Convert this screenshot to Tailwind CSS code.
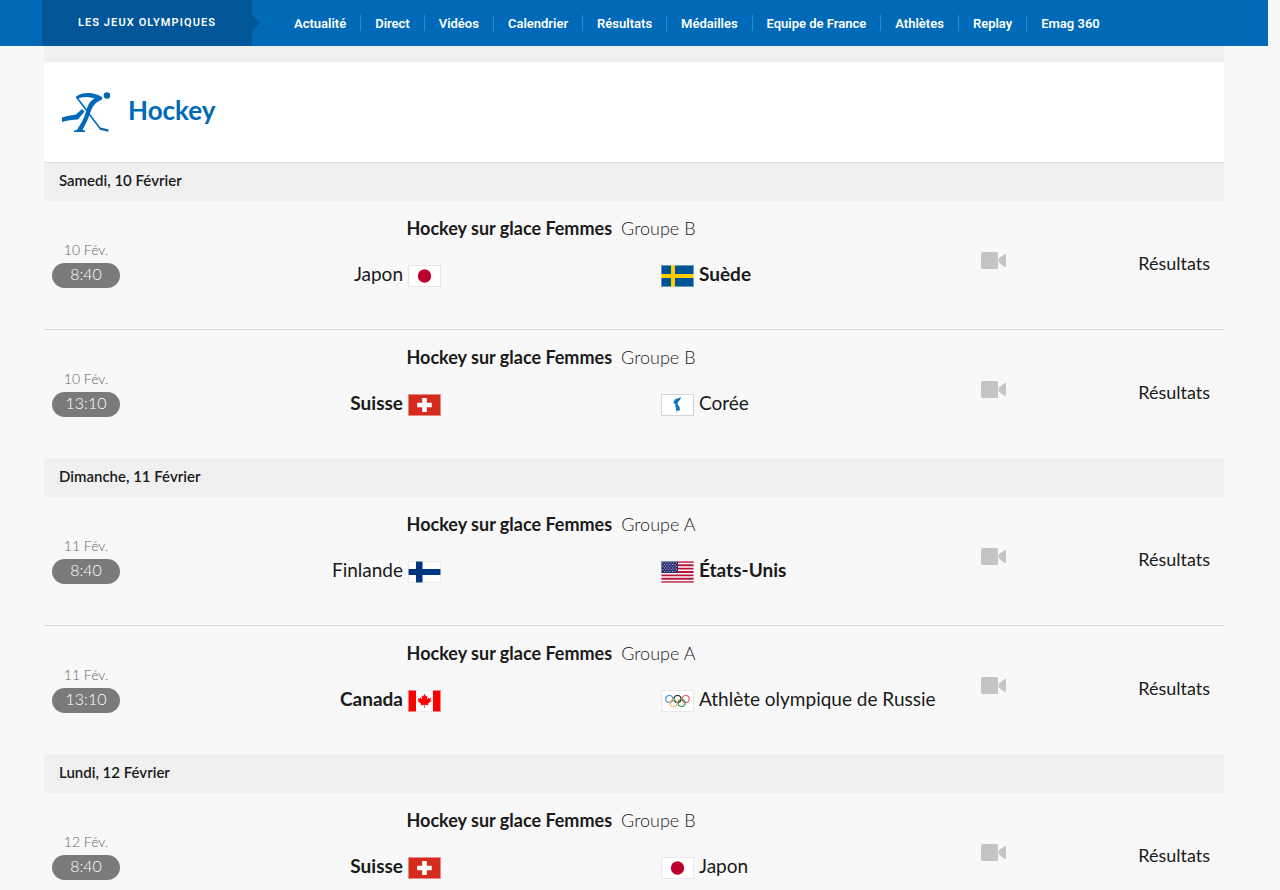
<!DOCTYPE html>
<html lang="fr">
<head>
<meta charset="utf-8">
<meta name="viewport" content="width=device-width, initial-scale=1">
<title>Hockey - Les Jeux Olympiques</title>
<script src="https://cdn.jsdelivr.net/npm/@tailwindcss/browser@4"></script>
</head>
<body class="bg-[#f8f8f8] pr-3 font-['Lato',sans-serif] text-[#1a1a1a] h-screen overflow-hidden">
<svg class="hidden" aria-hidden="true">
  <symbol id="video" viewBox="0 0 25 17"><rect width="17" height="17" rx="1.5" fill="#c4c4c4"/><path d="M17.800 6.500L23.500 2.300Q25 1.600 25 2.500V14.500Q25 15.400 23.500 14.700L17.800 10.500z" fill="#c4c4c4"/></symbol>
  <symbol id="jp" viewBox="0 0 33 22"><rect x=".5" y=".5" width="32" height="21" fill="#fff" stroke="#e8e8e8"/><circle cx="16.500" cy="11" r="6.700" fill="#bc002d"/></symbol>
  <symbol id="se" viewBox="0 0 33 22"><rect width="33" height="22" fill="#005293"/><path d="M10 0h4v22h-4zM0 9h33v4H0z" fill="#fecb00"/><rect x=".5" y=".5" width="32" height="21" fill="none" stroke="#fff" stroke-opacity=".4"/></symbol>
  <symbol id="ch" viewBox="0 0 33 22"><rect width="33" height="22" fill="#d52b1e"/><path d="M14.200 4h4.600v4.700h5v4.600h-5V18h-4.600v-4.700h-5V8.700h5z" fill="#fff"/><rect x=".5" y=".5" width="32" height="21" fill="none" stroke="#fff" stroke-opacity=".45"/></symbol>
  <symbol id="kr" viewBox="0 0 33 22"><rect x=".5" y=".5" width="32" height="21" fill="#fff" stroke="#d4d4d4"/><path d="M20 3l-1 3-2 2-.5 2 2 3 .5 3-2 1-2-.5V13.500l-1-2 1-1-2-1-.5-2 2-2.500 2-.500z" fill="#0f76bd"/><path d="M14.500 18h1.500v1h-1.500z" fill="#9cc8e5"/></symbol>
  <symbol id="fi" viewBox="0 0 33 22"><rect width="33" height="22" fill="#fff"/><path d="M8 0h6.500v22H8zM0 8h33v6H0z" fill="#003580"/><rect x=".5" y=".5" width="32" height="21" fill="none" stroke="#e0e0e0" stroke-opacity=".6"/></symbol>
  <symbol id="us" viewBox="0 0 33 22"><rect width="33" height="22" fill="#fff"/><path d="M0 .85h33M0 4.230h33M0 7.610h33M0 11h33M0 14.380h33M0 17.770h33M0 21.150h33" stroke="#b9143c" stroke-width="1.900"/><rect width="17" height="12" fill="#2b2f6b"/><path d="M1.500 1.700h15M1.500 5.200h15M1.500 8.700h15" stroke="#fff" stroke-opacity=".65" stroke-dasharray="1 1.700"/><path d="M2.900 3.500h13M2.900 7h13M2.900 10.500h13" stroke="#fff" stroke-opacity=".65" stroke-dasharray="1 1.700"/><rect x=".5" y=".5" width="32" height="21" fill="none" stroke="#fff" stroke-opacity=".4"/></symbol>
  <symbol id="ca" viewBox="0 0 33 22"><rect width="33" height="22" fill="#fff"/><path d="M0 0h8v22H0zM25 0h8v22h-8z" fill="#f00"/><path d="M16.500 3.800l1.500 2.700 1.500-.7-.7 3.700 2.100-2 .4 1.100 1.900-.3-.7 2 1 .6-3.600 2.900.4 1.400-3.500-.5v3.300h-.6v-3.300l-3.500.5.400-1.400-3.600-2.900 1-.6-.7-2 1.900.3.400-1.100 2.100 2-.7-3.700 1.500.7z" fill="#f00"/><rect x=".5" y=".5" width="32" height="21" fill="none" stroke="#e0e0e0" stroke-opacity=".6"/></symbol>
  <symbol id="oar" viewBox="0 0 33 22"><rect x=".5" y=".5" width="32" height="21" fill="#fff" stroke="#e8e8e8"/><g fill="none" stroke-width="1.100"><circle cx="8.300" cy="9" r="3.500" stroke="#3a93c8"/><circle cx="16.500" cy="9" r="3.500" stroke="#222"/><circle cx="24.700" cy="9" r="3.500" stroke="#e8496a"/><circle cx="12.400" cy="13" r="3.500" stroke="#f8b548"/><circle cx="20.600" cy="13" r="3.500" stroke="#2f9150"/></g></symbol>
</svg>

<header class="bg-[#0069b8] text-white font-['Roboto',sans-serif] h-[46px]">
  <div class="max-w-[1184px] mx-auto flex h-full items-center">
    <a href="#" class="relative flex h-full w-[210px] shrink-0 items-center justify-center bg-[#005696] pt-px text-[11px] font-semibold tracking-widest">LES JEUX OLYMPIQUES
      <svg class="absolute left-full top-[15px] h-4 w-2" viewBox="0 0 8 16"><path d="M0 0l8 8-8 8z" fill="#005696"/></svg>
    </a>
    <nav class="ml-7 flex divide-x divide-[#338acb] text-[13px] leading-[14px] font-semibold whitespace-nowrap">
      <a href="#" class="px-[14px] pt-[2px]">Actualité</a><a href="#" class="px-[14px] pt-[2px]">Direct</a><a href="#" class="px-[14px] pt-[2px]">Vidéos</a><a href="#" class="px-[14px] pt-[2px]">Calendrier</a><a href="#" class="px-[14px] pt-[2px]">Résultats</a><a href="#" class="px-[14px] pt-[2px]">Médailles</a><a href="#" class="px-[14px] pt-[2px]">Equipe de France</a><a href="#" class="px-[14px] pt-[2px]">Athlètes</a><a href="#" class="px-[14px] pt-[2px]">Replay</a><a href="#" class="px-[14px] pt-[2px]">Emag 360</a>
    </nav>
  </div>
</header>

<main class="max-w-[1180px] mx-auto">
  <div class="h-4 bg-[#f0f0f0]"></div>
  <div class="flex h-[100px] items-center gap-[18px] bg-white pl-[18px]">
    <svg class="h-10 w-12" viewBox="0 0 48 40" fill="none" stroke="#0069b8" aria-hidden="true">
      <circle cx="45" cy="3.500" r="3.300" fill="#0069b8" stroke="none"/>
      <path d="M14 4.500C22-.8 33 .2 40.500 5.500L39.500 8C34 10 31 13 28.500 20 26 28 23 33 20.500 38L23 38.500V40H12V38.500L15 38C18 33 22 27 23.500 21 25.500 13 28 9 32.500 6.500 26 4.300 20 4.500 14.800 7z" fill="#0069b8" stroke="none"/>
      <path d="M0 25.500C6 23.500 11 23 14 22.500L20 17 22.500 19.500 16 27.500C10 27.500 5 28.500 0 30z" fill="#0069b8" stroke="none"/>
      <path d="M14.500 5L38.500 37" stroke-width="1.600"/><path d="M38 36.600L46.500 38.600" stroke-width="2.400"/>
    </svg>
    <h1 class="pb-[5px] text-[26px] leading-8 font-bold text-[#0069b8]">Hockey</h1>
  </div>

  <section>
    <h2 class="h-[39px] border-t border-[#dcdcdc] bg-[#f0f0f0] pl-[15px] text-[15px] leading-[34px] font-semibold">Samedi, 10 Février</h2>
    <article class="flex h-[129px] border-b border-[#d9d9d9]">
      <div class="flex w-[84px] flex-col items-center pt-[38px]"><span class="mb-[2px] text-sm leading-[22px] font-light text-[#666]">10 Fév.</span><time class="w-[68px] rounded-full bg-[#7a7a7a] text-center text-base leading-[22px] h-[25px] font-light text-white">8:40</time></div>
      <div class="grid flex-1 grid-cols-[1fr_220px_1fr] content-start pt-[15px] text-[19px] leading-6">
        <h3 class="col-span-3 mb-[21px] flex justify-center gap-[9px] text-lg leading-6 font-bold">Hockey sur glace Femmes <span class="font-light">Groupe B</span></h3>
        <div class="flex items-center justify-end gap-[5px]">Japon <svg class="h-[22px] w-[33px] mt-1"><use href="#jp"/></svg></div>
        <div class="col-start-3 flex items-center gap-[5px] font-bold"><svg class="h-[22px] w-[33px] mt-1"><use href="#se"/></svg> Suède</div>
      </div>
      <div class="flex w-[250px] justify-between pl-[7px] pr-[14px]"><svg class="mt-[51px] h-[17px] w-[25px]" role="img" aria-label="Vidéo"><use href="#video"/></svg><a href="#" class="mt-[50px] text-lg leading-6">Résultats</a></div>
    </article>
    <article class="flex h-[128px]">
      <div class="flex w-[84px] flex-col items-center pt-[38px]"><span class="mb-[2px] text-sm leading-[22px] font-light text-[#666]">10 Fév.</span><time class="w-[68px] rounded-full bg-[#7a7a7a] text-center text-base leading-[22px] h-[25px] font-light text-white">13:10</time></div>
      <div class="grid flex-1 grid-cols-[1fr_220px_1fr] content-start pt-[15px] text-[19px] leading-6">
        <h3 class="col-span-3 mb-[21px] flex justify-center gap-[9px] text-lg leading-6 font-bold">Hockey sur glace Femmes <span class="font-light">Groupe B</span></h3>
        <div class="flex items-center justify-end gap-[5px] font-bold">Suisse <svg class="h-[22px] w-[33px] mt-1"><use href="#ch"/></svg></div>
        <div class="col-start-3 flex items-center gap-[5px]"><svg class="h-[22px] w-[33px] mt-1"><use href="#kr"/></svg> Corée</div>
      </div>
      <div class="flex w-[250px] justify-between pl-[7px] pr-[14px]"><svg class="mt-[51px] h-[17px] w-[25px]" role="img" aria-label="Vidéo"><use href="#video"/></svg><a href="#" class="mt-[50px] text-lg leading-6">Résultats</a></div>
    </article>
  </section>

  <section>
    <h2 class="h-[39px] bg-[#f0f0f0] pl-[15px] text-[15px] leading-9 font-semibold">Dimanche, 11 Février</h2>
    <article class="flex h-[129px] border-b border-[#d9d9d9]">
      <div class="flex w-[84px] flex-col items-center pt-[38px]"><span class="mb-[2px] text-sm leading-[22px] font-light text-[#666]">11 Fév.</span><time class="w-[68px] rounded-full bg-[#7a7a7a] text-center text-base leading-[22px] h-[25px] font-light text-white">8:40</time></div>
      <div class="grid flex-1 grid-cols-[1fr_220px_1fr] content-start pt-[15px] text-[19px] leading-6">
        <h3 class="col-span-3 mb-[21px] flex justify-center gap-[9px] text-lg leading-6 font-bold">Hockey sur glace Femmes <span class="font-light">Groupe A</span></h3>
        <div class="flex items-center justify-end gap-[5px]">Finlande <svg class="h-[22px] w-[33px] mt-1"><use href="#fi"/></svg></div>
        <div class="col-start-3 flex items-center gap-[5px] font-bold"><svg class="h-[22px] w-[33px] mt-1"><use href="#us"/></svg> États-Unis</div>
      </div>
      <div class="flex w-[250px] justify-between pl-[7px] pr-[14px]"><svg class="mt-[51px] h-[17px] w-[25px]" role="img" aria-label="Vidéo"><use href="#video"/></svg><a href="#" class="mt-[50px] text-lg leading-6">Résultats</a></div>
    </article>
    <article class="flex h-[128px]">
      <div class="flex w-[84px] flex-col items-center pt-[38px]"><span class="mb-[2px] text-sm leading-[22px] font-light text-[#666]">11 Fév.</span><time class="w-[68px] rounded-full bg-[#7a7a7a] text-center text-base leading-[22px] h-[25px] font-light text-white">13:10</time></div>
      <div class="grid flex-1 grid-cols-[1fr_220px_1fr] content-start pt-[15px] text-[19px] leading-6">
        <h3 class="col-span-3 mb-[21px] flex justify-center gap-[9px] text-lg leading-6 font-bold">Hockey sur glace Femmes <span class="font-light">Groupe A</span></h3>
        <div class="flex items-center justify-end gap-[5px] font-bold">Canada <svg class="h-[22px] w-[33px] mt-1"><use href="#ca"/></svg></div>
        <div class="col-start-3 flex items-center gap-[5px] whitespace-nowrap"><svg class="h-[22px] w-[33px] mt-1"><use href="#oar"/></svg> Athlète olympique de Russie</div>
      </div>
      <div class="flex w-[250px] justify-between pl-[7px] pr-[14px]"><svg class="mt-[51px] h-[17px] w-[25px]" role="img" aria-label="Vidéo"><use href="#video"/></svg><a href="#" class="mt-[50px] text-lg leading-6">Résultats</a></div>
    </article>
  </section>

  <section>
    <h2 class="h-[39px] bg-[#f0f0f0] pl-[15px] text-[15px] leading-9 font-semibold">Lundi, 12 Février</h2>
    <article class="flex h-[129px] border-b border-[#d9d9d9]">
      <div class="flex w-[84px] flex-col items-center pt-[38px]"><span class="mb-[2px] text-sm leading-[22px] font-light text-[#666]">12 Fév.</span><time class="w-[68px] rounded-full bg-[#7a7a7a] text-center text-base leading-[22px] h-[25px] font-light text-white">8:40</time></div>
      <div class="grid flex-1 grid-cols-[1fr_220px_1fr] content-start pt-[15px] text-[19px] leading-6">
        <h3 class="col-span-3 mb-[21px] flex justify-center gap-[9px] text-lg leading-6 font-bold">Hockey sur glace Femmes <span class="font-light">Groupe B</span></h3>
        <div class="flex items-center justify-end gap-[5px] font-bold">Suisse <svg class="h-[22px] w-[33px] mt-1"><use href="#ch"/></svg></div>
        <div class="col-start-3 flex items-center gap-[5px]"><svg class="h-[22px] w-[33px] mt-1"><use href="#jp"/></svg> Japon</div>
      </div>
      <div class="flex w-[250px] justify-between pl-[7px] pr-[14px]"><svg class="mt-[51px] h-[17px] w-[25px]" role="img" aria-label="Vidéo"><use href="#video"/></svg><a href="#" class="mt-[50px] text-lg leading-6">Résultats</a></div>
    </article>
  </section>
</main>
</body>
</html>
